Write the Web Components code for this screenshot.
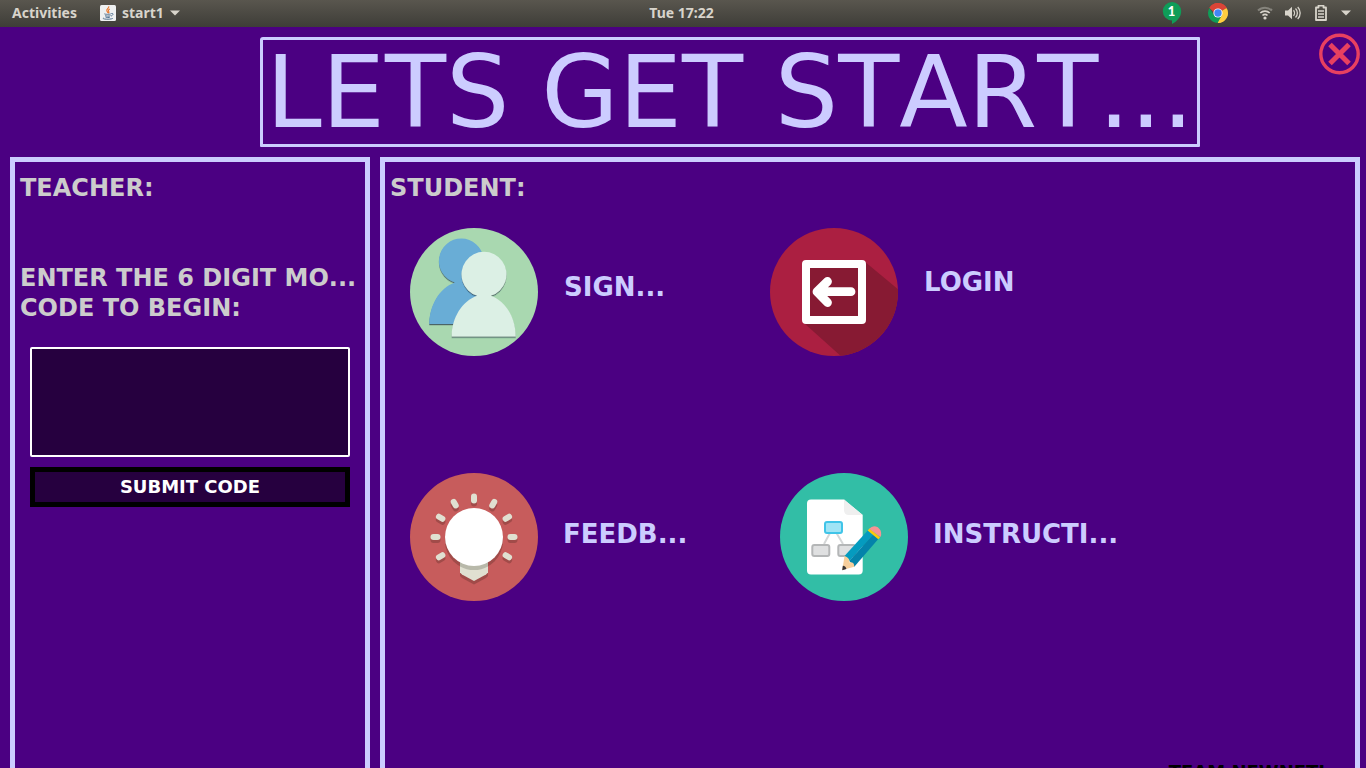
<!DOCTYPE html>
<html lang="en">
<head>
<meta charset="utf-8">
<title>start1</title>
<style>
html, body { margin: 0; height: 100%; }
body { background: #4b0082; overflow: hidden; font-family: "DejaVu Sans", sans-serif; font-kerning: none; }
</style>
</head>
<body>
<start-app></start-app>

<template id="app-t">
<style>
:host { display: flex; flex-direction: column; height: 100vh; overflow: hidden; background: #4b0082; }
header { display: grid; grid-template-columns: 250px minmax(0, 1fr) 160px; padding: 6px 6px 0 10px; }
h1 { grid-column: 2; box-sizing: border-box; margin: 4px 0 0; border: 3px solid #ccccff; border-radius: 3px 1px 1px 1px; padding: 2px 3px 0; font-weight: 400; font-size: 100px; line-height: 102px; color: #ccccff; white-space: nowrap; }
.close { justify-self: end; align-self: start; width: 41px; height: 42px; padding: 0; border: 0; background: none; }
.close svg { display: block; }
main { flex: 1; min-height: 0; display: grid; grid-template-columns: 360px minmax(0, 1fr); gap: 10px; padding: 10px 6px 0 10px; }
.row { display: grid; padding: 14px 20px 0; }
.row.first { grid-template-columns: 360px 1fr; --label-gap: 26px; }
.row.second { grid-template-columns: 370px 1fr; padding-top: 117px; }
footer { margin-top: 159px; padding-right: 25px; text-align: right; font-weight: 700; font-size: 18px; line-height: 24px; color: #000; }
</style>
<top-bar></top-bar>
<header>
  <h1>LETS GET START...</h1>
  <button class="close" aria-label="Close"><svg width="41" height="42" viewBox="0 0 41 42"><circle cx="20.500" cy="21" r="18.700" fill="none" stroke="#e84060" stroke-width="3.400"/><path d="M11 11.500l19 19M30 11.500l-19 19" stroke="#e84060" stroke-width="5"/></svg></button>
</header>
<main>
  <side-panel heading="TEACHER:"><code-form></code-form></side-panel>
  <side-panel heading="STUDENT:">
    <div class="row first">
      <menu-tile icon="users" style="--label-height:118px">SIGN...</menu-tile>
      <menu-tile icon="login" style="--label-height:108px">LOGIN</menu-tile>
    </div>
    <div class="row second">
      <menu-tile icon="bulb" style="--label-height:122px">FEEDB...</menu-tile>
      <menu-tile icon="doc" style="--label-height:122px">INSTRUCTI...</menu-tile>
    </div>
    <footer>TEAM NEWNETI</footer>
  </side-panel>
</main>
</template>

<template id="bar-t">
<style>
:host { display: grid; grid-template-columns: 1fr auto 1fr; align-items: center; flex: none; box-sizing: border-box; height: 27px; padding: 0 15px 2px 12px; background: linear-gradient(#59564e, #3e3d38); color: #d8d4cb; font: 700 14px/25px "Noto Sans", sans-serif; }
.left, .right { display: flex; align-items: center; }
.left { gap: 23px; }
.right { justify-content: flex-end; }
button { display: flex; align-items: center; padding: 0; border: 0; background: none; color: inherit; font: inherit; }
.app { gap: 6px; }
svg { display: block; }
.chat { margin-right: 26px; }
.chrome { margin-right: 29px; }
.status { gap: 12px; }
</style>
<div class="left">
  <button>Activities</button>
  <button class="app">
    <svg width="16" height="16" viewBox="0 0 16 16"><rect width="16" height="16" rx="1.500" fill="#eef0f1"/><path d="M8.700 1.300c1 1.800-3 2.700-1.800 4.800.4.800 1.200 1.100 1 2M9.800 4c-1.500.8-1.800 1.600-1 2.600.5.800.1 1.200-.4 1.600" fill="none" stroke="#e8762b" stroke-width="1.100"/><path d="M4.500 8.700c-.8.800 6 .8 6.300.1M5 10.500c0 .8 5 .8 5.500.1M5.500 12c.3.700 4 .7 4.500 0M3.600 12.800c-3 1.700 9 2 9.300.2M11.300 8.500c3-.5 1.500 2-.3 2.600" fill="none" stroke="#4e6f8e" stroke-width="1"/></svg>
    <span>start1</span>
    <svg width="10" height="6" viewBox="0 0 10 6"><path d="M0 .5h10L5 5.500z" fill="#d8d4cb"/></svg>
  </button>
</div>
<time>Tue 17:22</time>
<div class="right">
  <svg class="chat" width="20" height="22" viewBox="0 0 20 22"><path d="M10 0a9.200 9.200 0 0 1 9.200 9.200c0 6-4.700 10.400-9.200 12.800v-3.600A9.200 9.200 0 1 1 10 0z" fill="#0f9d58"/><text x="9.500" y="14" text-anchor="middle" fill="#fff" font-size="13" font-family="Lato" font-weight="900">1</text></svg>
  <svg class="chrome" width="20" height="20" viewBox="0 0 20 20"><path d="M10 10L1.340 5A10 10 0 0 1 18.660 5z" fill="#db4437"/><path d="M10 10L18.660 5A10 10 0 0 1 10 20z" fill="#ffcd40"/><path d="M13.900 12.200L9.500 20H10a10 10 0 0 0 8-15.500z" fill="#ffcd40"/><path d="M1.500 4.800A10 10 0 0 1 18.900 5.500H10l-4 4z" fill="#db4437"/><path d="M1.400 4.900L6.100 12.200l7.800 0L9.600 20A10 10 0 0 1 1.400 4.900z" fill="#0f9d58"/><circle cx="10" cy="10" r="4.600" fill="#fff"/><circle cx="10" cy="10" r="3.700" fill="#4285f4"/></svg>
  <button class="status" aria-label="System menu">
    <svg width="16" height="14" viewBox="0 0 16 14" fill="none"><path d="M1 4.500a10 10 0 0 1 14 0" stroke="#85837c" stroke-width="2"/><path d="M3.300 7a6.600 6.600 0 0 1 9.400 0M5.500 9.500a3.500 3.500 0 0 1 5 0" stroke="#d8d4cb" stroke-width="1.700"/><circle cx="8" cy="12" r="1.600" fill="#d8d4cb"/></svg>
    <svg width="16" height="14" viewBox="0 0 16 14" fill="none"><path d="M0 4.500h3L7 .8v12.400L3 9.500H0z" fill="#d8d4cb"/><path d="M8.500 4.200c1.300 1.500 1.300 4.100 0 5.600M10.500 2.500c2.500 2.500 2.500 6.500 0 9M12.700 1c3.300 3.300 3.300 8.700 0 12" stroke="#d8d4cb" stroke-width="1.300"/></svg>
    <svg width="16" height="16" viewBox="0 0 16 16"><path d="M3 2.500h2.500v-2h5v2H13V15H3z" fill="none" stroke="#d8d4cb" stroke-width="1.800" stroke-linejoin="round"/><path d="M5 6h6M5 9h6M5 12h6" stroke="#d8d4cb" stroke-width="1.500"/></svg>
    <svg width="10" height="6" viewBox="0 0 10 6"><path d="M0 .5h10L5 5.500z" fill="#d8d4cb"/></svg>
  </button>
</div>
</template>

<template id="panel-t">
<style>
:host { display: block; box-sizing: border-box; min-width: 0; border: 5px solid #ccccff; border-bottom: 0; padding: 0 5px; }
h2 { margin: 0; font-size: 24px; line-height: 52px; color: #cccccc; }
</style>
<h2></h2>
<slot></slot>
</template>

<template id="form-t">
<style>
:host { display: block; }
form { display: flex; flex-direction: column; padding: 49px 10px 0; }
label { margin: 0 -10px 24px; font-weight: 700; font-size: 24px; line-height: 30px; color: #cccccc; white-space: nowrap; }
input { box-sizing: border-box; width: 100%; height: 110px; margin: 0 0 10px; border: 2px solid #fff; border-radius: 2px; background: #26003f; color: #fff; font: 700 48px "DejaVu Sans", sans-serif; text-align: center; }
button { height: 40px; padding: 0; border: 5px solid #000; background: #26003f; color: #fff; font: 700 18px/30px "DejaVu Sans", sans-serif; }
</style>
<form>
  <label for="code">ENTER THE 6 DIGIT MO...<br>CODE TO BEGIN:</label>
  <input id="code" type="text" maxlength="6">
  <button type="button">SUBMIT CODE</button>
</form>
</template>

<template id="tile-t">
<style>
:host { display: block; }
button { display: flex; align-items: flex-start; gap: var(--label-gap, 25px); height: 128px; padding: 0; border: 0; background: none; color: #ccccff; font: 700 26px "DejaVu Sans", sans-serif; }
svg { display: block; flex: none; }
.label { line-height: var(--label-height, 128px); white-space: nowrap; }
</style>
<button><svg width="128" height="128" viewBox="0 0 128 128" aria-hidden="true"></svg><span class="label"><slot></slot></span></button>
</template>

<script>
const ICONS = {
  users: `
    <defs><filter id="s" x="-20%" y="-20%" width="140%" height="140%"><feDropShadow dx="0" dy="1.200" stdDeviation=".6" flood-color="#234" flood-opacity=".7"/></filter></defs>
    <circle cx="64" cy="64" r="64" fill="#a9d8b0"/>
    <path filter="url(#s)" fill="#69add6" d="M45 54.500A22.400 22.400 0 1 1 73.500 30L75 96H19.300C19.300 78 29 60 45 54.500z"/>
    <path filter="url(#s)" fill="#dcf0e5" d="M67.300 67.800A22.500 22.500 0 1 1 80.700 67.800C96 73 105.700 90 105.700 108.500H41.700C41.700 90 52 73 67.300 67.800z"/>`,
  login: `
    <defs><clipPath id="c"><circle cx="64" cy="64" r="64"/></clipPath></defs>
    <circle cx="64" cy="64" r="64" fill="#ab1f41"/>
    <path clip-path="url(#c)" fill="#871a33" d="M94 33l36 30v67H73L34 95z"/>
    <rect x="36" y="36" width="56" height="56" rx=".5" fill="#871a33"/>
    <rect x="36" y="36" width="56" height="56" fill="none" stroke="#fff" stroke-width="8" stroke-linejoin="round"/>
    <path d="M81 63.700H47M57.500 53.500L47 63.700l10.500 10.800" fill="none" stroke="#fff" stroke-width="8.800" stroke-linecap="round" stroke-linejoin="round"/>`,
  bulb: (() => {
    const rays = [-120, -90, -60, -30, 0, 30, 60, 90, 120]
      .map(a => `<path d="M64 27.500v-4" transform="rotate(${a} 64 64)"/>`).join("");
    return `
    <circle cx="64" cy="64" r="64" fill="#c75c5c"/>
    <g fill="none" stroke="#a14b49" stroke-width="6" stroke-linecap="round" transform="translate(0 3)">${rays}</g>
    <g fill="none" stroke="#e0e0d1" stroke-width="6" stroke-linecap="round">${rays}</g>
    <circle cx="64" cy="68" r="29" fill="#a14b49"/>
    <path d="M50 88h28v15l-2 2-12 6.500L52 105l-2-2z" fill="#a14b49"/>
    <path d="M50 85h28v14.500l-2 2L64 108l-12-6.500-2-2z" fill="#e0e0d1"/>
    <path d="M50 85h28v8.500a29 29 0 0 1-28 0z" fill="#b8b9aa"/>
    <circle cx="64" cy="64" r="29" fill="#fff"/>`;
  })(),
  doc: `
    <circle cx="64" cy="64" r="64" fill="#32bea6"/>
    <path d="M31 26.500h33L82.700 42v55.500q0 4-4 4H31q-4 0-4-4v-67q0-4 4-4z" fill="#fff"/>
    <path d="M64 26.500L82.700 42H69q-5 0-5-5z" fill="#efefef"/>
    <path d="M50 60l-6 11M56.500 60l6.500 11" stroke="#d4d6d7" stroke-width="2"/>
    <rect x="45" y="49" width="17" height="11" rx="2" fill="#a0e4f5" stroke="#40c4e8" stroke-width="2"/>
    <rect x="32.300" y="72" width="17" height="11" rx="2" fill="#dfe0e1" stroke="#b4b6b7" stroke-width="2"/>
    <rect x="58.300" y="72" width="17" height="11" rx="2" fill="#dfe0e1" stroke="#b4b6b7" stroke-width="2"/>
    <path d="M87.700 57.500L64.500 83l5 5 23.600-26.200z" fill="#059bbf"/>
    <path d="M93 61.700L69.300 88l5 5.700L98.300 66z" fill="#0483aa"/>
    <path d="M64.500 83L62.300 97l12-3.300c.2-3.500-2.200-5-5-4.200.8-3.200-1.500-5.500-4.800-6.500z" fill="#f7cf9c"/>
    <path d="M62.800 92.800l-.6 4.400 4.200-1.100q-.5-3-3.600-3.300z" fill="#3a3434"/>
    <path d="M89.500 55.500l-1.800 2L98.300 66.300l1.800-2z" fill="#fdc80a"/>
    <path d="M89.300 55.700q3.500-4.200 8.600-1.500 5 4.500 2.500 9.900z" fill="#f69394"/>`
};

function define(name, templateId, setup) {
  customElements.define(name, class extends HTMLElement {
    constructor() {
      super();
      this.attachShadow({ mode: "open" })
        .append(document.getElementById(templateId).content.cloneNode(true));
    }
    connectedCallback() {
      if (setup) setup(this, this.shadowRoot);
    }
  });
}

define("top-bar", "bar-t");
define("code-form", "form-t");
define("side-panel", "panel-t", (host, root) => {
  root.querySelector("h2").textContent = host.getAttribute("heading");
});
define("menu-tile", "tile-t", (host, root) => {
  root.querySelector("svg").innerHTML = ICONS[host.getAttribute("icon")];
});
define("start-app", "app-t");
</script>
</body>
</html>
